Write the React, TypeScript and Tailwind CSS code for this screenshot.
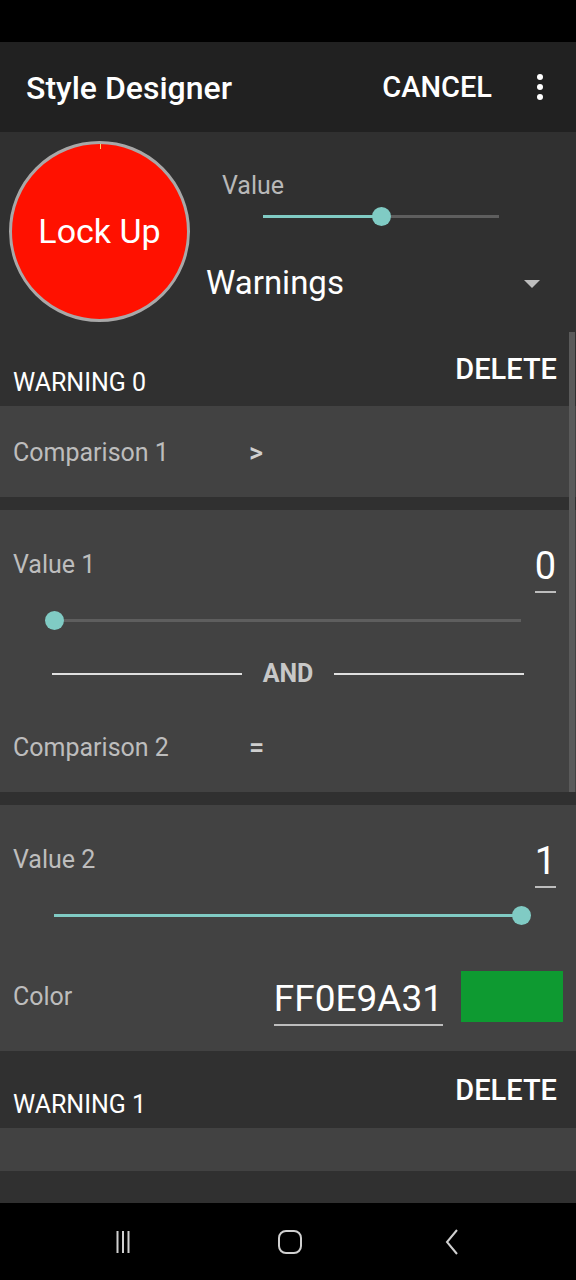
import { ReactNode } from 'react';

const font = { fontFamily: 'Roboto, "Noto Sans", sans-serif' };

function Slider({ left, right, value }: { left: number; right: number; value: number }) {
  // value 0..1, thumb sits on the track
  const pct = `${value * 100}%`;
  return (
    <div className="relative h-[18px]" style={{ marginLeft: left, marginRight: right }}>
      <div className="absolute left-0 right-0 top-[8px] h-[3px] bg-[#5e5e5e]" />
      <div className="absolute left-0 top-[8px] h-[3px] bg-[#80cbc4]" style={{ width: pct }} />
      <div
        className="absolute top-0 w-[19px] h-[19px] -ml-[9px] rounded-full bg-[#80cbc4]"
        style={{ left: pct }}
      />
    </div>
  );
}

function WarningHeader({ title, h, top, del }: { title: string; h: string; top: string; del: string }) {
  return (
    <div className={`shrink-0 flex items-start justify-between bg-[#303030] pl-[13px] pr-[19px] ${h}`}>
      <div className={`text-[25px] leading-[30px] text-white ${top}`}>{title}</div>
      <div className={`text-[29px] leading-[34px] font-medium text-white ${del}`}>DELETE</div>
    </div>
  );
}

function Card({ children, className = '' }: { children: ReactNode; className?: string }) {
  return <div className={`shrink-0 bg-[#424242] ${className}`}>{children}</div>;
}

function NumberField({ v }: { v: string }) {
  return (
    <div className="flex flex-col items-center mr-[20px]">
      <span className="text-[38px] leading-[40px] text-white">{v}</span>
      <span className="w-[21px] h-[2px] bg-[#bdbdbd] mt-[5px]" />
    </div>
  );
}

function ValueRow({ label, v }: { label: string; v: string }) {
  return (
    <div className="flex items-start justify-between pl-[13px] mt-[36px]">
      <span className="mt-[4px] text-[25px] leading-[30px] text-[#bdbdbd]">{label}</span>
      <NumberField v={v} />
    </div>
  );
}

export default function App() {
  return (
    <div className="relative w-[576px] h-[1280px] overflow-hidden bg-[#303030] flex flex-col" style={font}>
      {/* status bar */}
      <div className="h-[42px] bg-black shrink-0" />

      {/* toolbar */}
      <div className="h-[90px] shrink-0 bg-[#212121] flex items-center pl-[26px] pr-[33px]">
        <div className="flex-1 text-[32px] font-medium text-white pt-[2px]">Style Designer</div>
        <div className="text-[29px] font-medium text-white mr-[45px] pt-[2px]">CANCEL</div>
        <div className="flex flex-col gap-[4px]">
          <span className="w-[6px] h-[6px] rounded-full bg-white" />
          <span className="w-[6px] h-[6px] rounded-full bg-white" />
          <span className="w-[6px] h-[6px] rounded-full bg-white" />
        </div>
      </div>

      {/* header: gauge + value */}
      <div className="h-[200px] shrink-0 flex pt-[9px] pl-[9px]">
        <div className="relative w-[181px] h-[181px] rounded-full border-[3px] border-[#a8a8a8] bg-[#ff1100] flex items-center justify-center">
          <span className="absolute top-0 left-1/2 w-px h-[5px] bg-[#ffcc66]" />
          <span className="text-[34px] text-white">Lock Up</span>
        </div>
        <div className="flex-1 flex flex-col pl-[16px]">
          <div className="pt-[30px] pl-[16px] text-[25px] leading-[30px] text-[#b8b8b8]">Value</div>
          <div className="mt-[6px]">
            <Slider left={57} right={77} value={0.5} />
          </div>
          <div className="flex items-center mt-[33px] pr-[36px]">
            <span className="flex-1 text-[33px] text-white">Warnings</span>
            <span className="w-0 h-0 mt-[3px] border-l-[8px] border-r-[8px] border-t-[8px] border-l-transparent border-r-transparent border-t-[#bdbdbd]" />
          </div>
        </div>
      </div>

      <WarningHeader title="WARNING 0" h="h-[74px]" top="mt-[36px]" del="mt-[20px]" />

      <Card className="h-[91px] flex items-center pl-[13px] pt-[3px]">
        <span className="w-[236px] text-[25px] text-[#bdbdbd]">Comparison 1</span>
        <span className="text-[27px] font-medium text-[#cfcfcf]">&gt;</span>
      </Card>

      <div className="h-[13px] shrink-0" />

      <Card className="h-[282px] flex flex-col">
        <ValueRow label="Value 1" v="0" />
        <div className="mt-[18px]">
          <Slider left={54} right={55} value={0} />
        </div>
        <div className="flex items-center mt-[30px] pl-[52px] pr-[52px]">
          <span className="flex-1 h-[2px] bg-[#e0e0e0]" />
          <span className="px-[21px] text-[25px] leading-[30px] font-bold text-[#c8c8c8]">AND</span>
          <span className="flex-1 h-[2px] bg-[#e0e0e0]" />
        </div>
        <div className="flex items-center pl-[13px] mt-[44px] h-[30px]">
          <span className="w-[236px] text-[25px] leading-[30px] text-[#bdbdbd]">Comparison 2</span>
          <span className="text-[27px] leading-[30px] font-medium text-[#cfcfcf]">=</span>
        </div>
      </Card>

      <div className="h-[13px] shrink-0" />

      <Card className="h-[246px] flex flex-col">
        <ValueRow label="Value 2" v="1" />
        <div className="mt-[18px]">
          <Slider left={54} right={55} value={1} />
        </div>
        <div className="flex items-start pl-[13px] pr-[13px] mt-[47px]">
          <span className="flex-1 mt-[11px] text-[25px] leading-[30px] text-[#bdbdbd]">Color</span>
          <div className="flex flex-col mt-[8px] mr-[18px]">
            <span className="text-[37px] leading-[40px] text-white">FF0E9A31</span>
            <span className="h-[2px] bg-[#bdbdbd] mt-[5px]" />
          </div>
          <span className="w-[102px] h-[51px] bg-[#0e9a31]" />
        </div>
      </Card>

      <WarningHeader title="WARNING 1" h="h-[77px]" top="mt-[39px]" del="mt-[22px]" />

      <Card className="h-[43px]" />
      <div className="h-[32px] shrink-0 bg-[#303030]" />

      {/* nav bar */}
      <div className="flex-1 bg-black flex items-center pl-[116px]">
        <svg width="14" height="24" viewBox="0 0 14 24" className="text-[#d0d0d0]">
          <path d="M1.5 1v22M7 1v22M12.5 1v22" stroke="currentColor" strokeWidth="2" />
        </svg>
        <svg width="26" height="26" viewBox="0 0 26 26" className="ml-[147px] text-[#d0d0d0]">
          <rect x="2" y="2" width="22" height="22" rx="7" fill="none" stroke="currentColor" strokeWidth="2" />
        </svg>
        <svg width="16" height="28" viewBox="0 0 16 28" className="ml-[141px] text-[#d0d0d0]">
          <path d="M13 2L3 14l10 12" fill="none" stroke="currentColor" strokeWidth="2" />
        </svg>
      </div>

      {/* scroll indicator */}
      <div className="absolute right-[1px] top-[332px] w-[6px] h-[460px] bg-[#5a5a5a]" />
    </div>
  );
}
